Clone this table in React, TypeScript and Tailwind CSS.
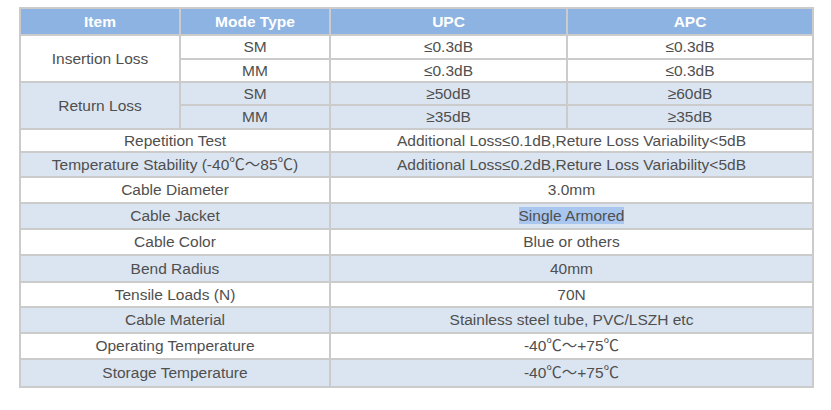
import React from 'react';

const cell = 'border-2 border-[#cbcbcb] text-center align-middle p-0 leading-none';
const rows: { label: string; value: React.ReactNode; h: string; alt: boolean }[] = [
  { label: 'Repetition Test', value: 'Additional Loss≤0.1dB,Reture Loss Variability<5dB', h: 'h-[23px]', alt: false },
  { label: 'Temperature Stability (-40℃～85℃)', value: 'Additional Loss≤0.2dB,Reture Loss Variability<5dB', h: 'h-[25px]', alt: true },
  { label: 'Cable Diameter', value: '3.0mm', h: 'h-[26px]', alt: false },
  { label: 'Cable Jacket', value: <span className="bg-[#a8c6ee]">Single Armored</span>, h: 'h-[26px]', alt: true },
  { label: 'Cable Color', value: 'Blue or others', h: 'h-[26px]', alt: false },
  { label: 'Bend Radius', value: '40mm', h: 'h-[27px]', alt: true },
  { label: 'Tensile Loads (N)', value: '70N', h: 'h-[25px]', alt: false },
  { label: 'Cable Material', value: 'Stainless steel tube, PVC/LSZH etc', h: 'h-[26px]', alt: true },
  { label: 'Operating Temperature', value: '-40℃～+75℃', h: 'h-[26px]', alt: false },
  { label: 'Storage Temperature', value: '-40℃～+75℃', h: 'h-[28px]', alt: true },
];

export default function App() {
  return (
    <div
      className="w-[831px] h-[410px] bg-white pt-[7px] pl-[19px]"
      style={{ fontFamily: '"Liberation Sans", Arial, "Noto Sans CJK SC", sans-serif' }}
    >
      <table className="table-fixed border-collapse w-[793px] text-[15.5px] text-[#4f4f4f]">
        <colgroup>
          <col className="w-[160px]" />
          <col className="w-[150px]" />
          <col className="w-[237px]" />
          <col className="w-[246px]" />
        </colgroup>
        <thead>
          <tr className="h-[27px] bg-[#8db3e2] text-white font-bold">
            <th className={cell}>Item</th>
            <th className={cell}>Mode Type</th>
            <th className={cell}>UPC</th>
            <th className={cell}>APC</th>
          </tr>
        </thead>
        <tbody>
          <tr className="h-[24px] bg-white">
            <td rowSpan={2} className={cell}>Insertion Loss</td>
            <td className={cell}>SM</td>
            <td className={cell}>≤0.3dB</td>
            <td className={cell}>≤0.3dB</td>
          </tr>
          <tr className="h-[23px] bg-white">
            <td className={cell}>MM</td>
            <td className={cell}>≤0.3dB</td>
            <td className={cell}>≤0.3dB</td>
          </tr>
          <tr className="h-[23px] bg-[#dbe5f1]">
            <td rowSpan={2} className={cell}>Return Loss</td>
            <td className={cell}>SM</td>
            <td className={cell}>≥50dB</td>
            <td className={cell}>≥60dB</td>
          </tr>
          <tr className="h-[24px] bg-[#dbe5f1]">
            <td className={cell}>MM</td>
            <td className={cell}>≥35dB</td>
            <td className={cell}>≥35dB</td>
          </tr>
          {rows.map((r) => (
            <tr key={r.label} className={`${r.h} ${r.alt ? 'bg-[#dbe5f1]' : 'bg-white'}`}>
              <td colSpan={2} className={cell}>{r.label}</td>
              <td colSpan={2} className={cell}>{r.value}</td>
            </tr>
          ))}
        </tbody>
      </table>
    </div>
  );
}
